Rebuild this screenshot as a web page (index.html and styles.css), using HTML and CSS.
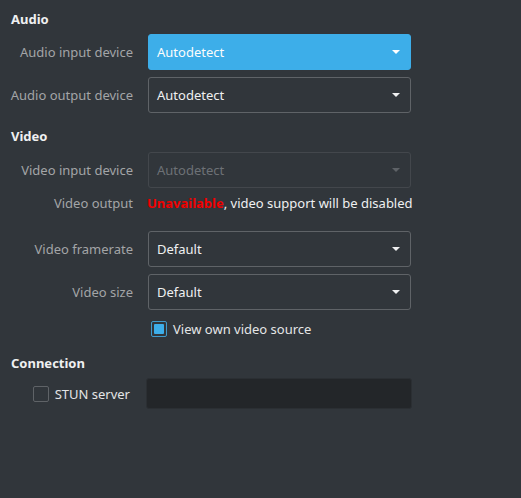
FILE: index.html
```html
<!DOCTYPE html>
<html>
<head>
<meta charset="utf-8">
<link rel="stylesheet" href="styles.css">
</head>
<body>
<div class="page">
  <div class="section-title">Audio</div>
  <div class="form">
    <div class="label">Audio input device</div>
    <div class="combo combo-focus"><span>Autodetect</span><span class="arrow"></span></div>
    <div class="label">Audio output device</div>
    <div class="combo"><span>Autodetect</span><span class="arrow"></span></div>
  </div>

  <div class="section-title section-gap">Video</div>
  <div class="form">
    <div class="label">Video input device</div>
    <div class="combo combo-disabled"><span>Autodetect</span><span class="arrow"></span></div>
    <div class="label label-output">Video output</div>
    <div class="output-text label-output"><span class="unavailable">Unavailable</span>, video support will be disabled</div>
    <div class="label">Video framerate</div>
    <div class="combo"><span>Default</span><span class="arrow"></span></div>
    <div class="label">Video size</div>
    <div class="combo"><span>Default</span><span class="arrow"></span></div>
    <div></div>
    <div class="check-row">
      <span class="checkbox checked"><span class="check-fill"></span></span>
      <span class="check-text">View own video source</span>
    </div>
  </div>

  <div class="section-title connection-gap">Connection</div>
  <div class="form-conn">
    <div class="check-row check-right">
      <span class="checkbox"></span>
      <span class="check-text">STUN server</span>
    </div>
    <div class="text-input"></div>
  </div>
</div>
</body>
</html>
```

FILE: styles.css
```css
html, body {
  margin: 0;
  padding: 0;
  background: #31363b;
}
body {
  font-family: "Noto Sans", "Open Sans", sans-serif;
  font-size: 13px;
  color: #eff0f1;
  width: 521px;
  height: 498px;
  overflow: hidden;
}
.page {
  padding-top: 10px;
}
.section-title {
  margin-left: 11px;
  font-weight: 700;
  line-height: 18px;
  color: #eff0f1;
}
.section-gap {
  margin-top: 14px;
}
.connection-gap {
  margin-top: 13px;
}
.form {
  display: grid;
  grid-template-columns: 133px 263px;
  column-gap: 15px;
  row-gap: 7px;
  margin-top: 6px;
}
.section-gap + .form {
  margin-top: 7px;
}
.label {
  text-align: right;
  align-self: center;
  color: #a3a5a7;
  white-space: nowrap;
}
.label-output {
  margin-bottom: 12px;
  line-height: 17px;
}
.output-text {
  margin-left: -1px;
  white-space: nowrap;
  color: #eff0f1;
}
.unavailable {
  color: #f00000;
  font-weight: 700;
}
.combo {
  box-sizing: border-box;
  height: 36px;
  border: 1px solid #5f6367;
  border-radius: 3px;
  display: flex;
  align-items: center;
  justify-content: space-between;
  padding: 0 10px 0 8px;
  color: #eff0f1;
}
.combo-focus {
  background: #3daee9;
  border-color: #3daee9;
  color: #fcfcfc;
}
.combo-disabled {
  border-color: #43474c;
  color: #6d7176;
}
.arrow {
  width: 0;
  height: 0;
  border-left: 4px solid transparent;
  border-right: 4px solid transparent;
  border-top: 4px solid #eff0f1;
}
.combo-focus .arrow {
  border-top-color: #ffffff;
}
.combo-disabled .arrow {
  border-top-color: #5e6267;
}
.check-row {
  display: flex;
  align-items: center;
  height: 24px;
  margin-left: 3px;
}
.checkbox {
  box-sizing: border-box;
  width: 16px;
  height: 16px;
  border: 1px solid #5f6367;
  border-radius: 2px;
  display: flex;
  align-items: center;
  justify-content: center;
  flex: none;
}
.checkbox.checked {
  border-color: #3f9acb;
}
.check-fill {
  width: 10px;
  height: 10px;
  background: #3daee9;
  border-radius: 1px;
}
.check-text {
  margin-left: 6px;
  color: #e4e5e6;
  white-space: nowrap;
}
.form-conn {
  display: grid;
  grid-template-columns: 130px 266px;
  column-gap: 16px;
  margin-top: 6px;
}
.check-right {
  justify-content: flex-end;
  align-self: center;
  margin-left: 0;
}
.text-input {
  box-sizing: border-box;
  height: 31px;
  background: #232629;
  border: 1px solid #2b2f33;
  border-radius: 3px;
}
```
